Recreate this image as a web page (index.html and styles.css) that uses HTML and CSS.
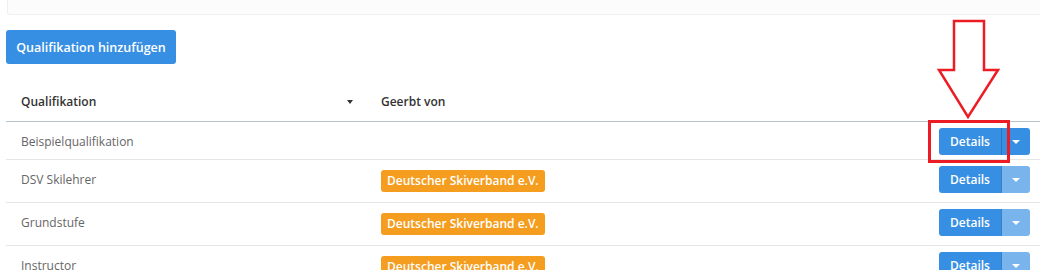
FILE: index.html
```html
<!DOCTYPE html>
<html lang="de">
<head>
<meta charset="utf-8">
<link rel="stylesheet" href="styles.css">
</head>
<body>
<div class="top-card"></div>
<div class="content">
  <button class="add-btn">Qualifikation hinzufügen</button>
  <div class="table">
    <div class="row head">
      <div class="cell c1"><span>Qualifikation</span><span class="caret"></span></div>
      <div class="cell c2">Geerbt von</div>
      <div class="cell c3"></div>
    </div>
    <div class="row first">
      <div class="cell c1">Beispielqualifikation</div>
      <div class="cell c2"></div>
      <div class="cell c3"><div class="split"><span class="main">Details</span><span class="drop"><span class="tri"></span></span></div></div>
    </div>
    <div class="row">
      <div class="cell c1">DSV Skilehrer</div>
      <div class="cell c2"><span class="badge">Deutscher Skiverband e.V.</span></div>
      <div class="cell c3"><div class="split off"><span class="main">Details</span><span class="drop"><span class="tri"></span></span></div></div>
    </div>
    <div class="row">
      <div class="cell c1">Grundstufe</div>
      <div class="cell c2"><span class="badge">Deutscher Skiverband e.V.</span></div>
      <div class="cell c3"><div class="split off"><span class="main">Details</span><span class="drop"><span class="tri"></span></span></div></div>
    </div>
    <div class="row">
      <div class="cell c1">Instructor</div>
      <div class="cell c2"><span class="badge">Deutscher Skiverband e.V.</span></div>
      <div class="cell c3"><div class="split off"><span class="main">Details</span><span class="drop"><span class="tri"></span></span></div></div>
    </div>
  </div>
</div>
<svg class="annot" width="1040" height="270" viewBox="0 0 1040 270">
  <polygon points="954,21 984,21 984,70 998,70 968,117 939,70 954,70" fill="#fff" stroke="#ec1c24" stroke-width="2.5" stroke-linejoin="miter"/>
  <rect x="929.5" y="121.5" width="79" height="40" fill="none" stroke="#ec1c24" stroke-width="3"/>
</svg>
</body>
</html>
```
FILE: styles.css
```css
html, body {
  margin: 0;
  padding: 0;
  background: #fff;
  font-family: "Open Sans", "Liberation Sans", sans-serif;
  overflow: hidden;
}
.top-card {
  margin-left: 7px;
  height: 14px;
  background: #fcfcfc;
  border: 1px solid #efefef;
  border-top: none;
  border-right: none;
  border-bottom-left-radius: 3px;
}
.content {
  padding-left: 6px;
}
.add-btn {
  display: block;
  margin-top: 15px;
  width: 170px;
  height: 34px;
  padding: 0;
  border: none;
  border-radius: 3px;
  background: #378fe3;
  color: #fff;
  font-family: inherit;
  font-weight: 600;
  font-size: 12.5px;
}
.table {
  margin-top: 17px;
}
.row {
  display: grid;
  grid-template-columns: 360px 1fr 200px;
  height: 42px;
  box-sizing: content-box;
  border-bottom: 1px solid #e6e6e6;
  align-items: start;
  padding-top: 6px;
  height: 36px;
  font-size: 12px;
  color: #666;
}
.row.first {
  height: 31px;
}
.row.head {
  height: 40px;
  padding-top: 0;
  align-items: center;
  border-bottom-color: #b5c3ce;
  color: #333;
  font-weight: 600;
}
.cell {
  line-height: 27px;
}
.c1 {
  padding-left: 15px;
  padding-right: 13px;
  display: flex;
  justify-content: space-between;
  align-items: center;
}
.c2 {
  padding-left: 15px;
}
.c3 {
  display: flex;
  justify-content: flex-end;
  padding-right: 10px;
}
.caret {
  width: 0;
  height: 0;
  border-left: 3.5px solid transparent;
  border-right: 3.5px solid transparent;
  border-top: 4px solid #333;
  margin-top: 2px;
}
.badge {
  display: inline-block;
  margin-top: 4px;
  height: 22px;
  line-height: 22px;
  padding: 0 6px;
  background: #f49d1f;
  color: #fff;
  font-weight: 600;
  font-size: 12px;
  border-radius: 3px;
}
.split {
  display: flex;
  height: 27px;
  border-radius: 3px;
  overflow: hidden;
}
.split .main {
  width: 62px;
  background: #378fe3;
  color: #fff;
  font-weight: 600;
  font-size: 12px;
  text-align: center;
  line-height: 27px;
}
.split .drop {
  width: 29px;
  background: #378fe3;
  border-left: 1px solid #2a73bd;
  box-sizing: border-box;
  display: flex;
  align-items: center;
  justify-content: center;
}
.split.off .drop {
  background: #7ab4ec;
  border-left-color: #3480cc;
}
.tri {
  width: 0;
  height: 0;
  border-left: 4px solid transparent;
  border-right: 4px solid transparent;
  border-top: 4px solid #fff;
  margin-top: 1px;
}
.annot {
  position: absolute;
  left: 0;
  top: 0;
  pointer-events: none;
}
```
